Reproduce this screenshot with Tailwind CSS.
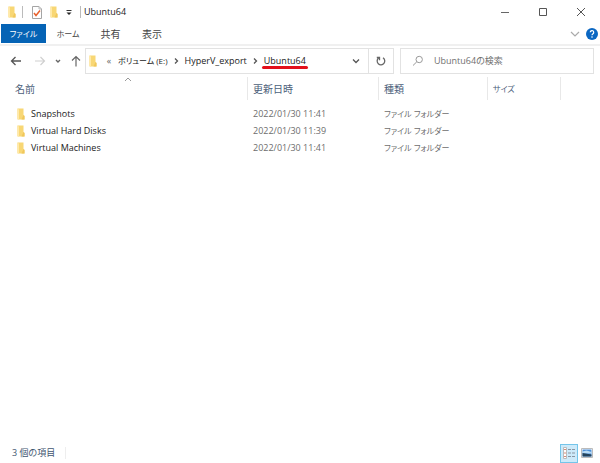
<!DOCTYPE html>
<html lang="ja">
<head>
<meta charset="utf-8">
<meta name="viewport" content="width=device-width, initial-scale=1">
<title>Ubuntu64</title>
<script src="https://cdn.jsdelivr.net/npm/@tailwindcss/browser@4"></script>
</head>
<body class="flex min-h-screen flex-col bg-white font-['Open_Sans','Noto_Sans_CJK_JP',sans-serif] text-[9px] leading-4 text-[#222] [font-feature-settings:'palt']">
<svg class="hidden" aria-hidden="true">
  <symbol id="folder" viewBox="0 0 8 12">
    <path fill="#f8d775" d="M.5.5h6v6.500l1 1V11.500h-7z"/>
    <path fill="#ffe9a8" d="M.3.5L2 1.500v10l-1.700-.6z"/>
    <path fill="#f0c75c" d="M6.500 7l1 1v3.500H4.500z"/>
  </symbol>
</svg>

<header class="flex h-6 items-center pl-2">
  <svg class="h-3 w-2"><use href="#folder"/></svg>
  <span class="ml-1.5 h-3 w-px bg-[#bbb]"></span>
  <button class="ml-2" aria-label="プロパティ">
    <svg class="h-[13px] w-3" viewBox="0 0 12 13" fill="none"><path d="M1.500.5h6.500l2.500 2.500v9.500h-9z" fill="#fff" stroke="#a5a5a5"/><path d="M8 .5V3h2.500" stroke="#bbb"/><path d="M3 7l2 2.500 4-5" stroke="#e8602c" stroke-width="1.500"/></svg>
  </button>
  <button class="ml-[7px]" aria-label="新しいフォルダー"><svg class="h-3 w-2"><use href="#folder"/></svg></button>
  <button class="ml-[7px]" aria-label="クイック アクセスのカスタマイズ">
    <svg class="h-2 w-2" viewBox="0 0 8 8"><path d="M1.500 2.500h5" stroke="#333"/><path d="M1.500 4.500h5L4 7z" fill="#222"/></svg>
  </button>
  <span class="ml-[7px] h-3 w-px bg-[#bbb]"></span>
  <h1 class="ml-[3px]">Ubuntu64</h1>
  <div class="ml-auto flex">
    <button class="grid h-6 w-[38px] place-items-center" aria-label="最小化"><svg class="h-2.5 w-2.5" viewBox="0 0 10 10"><path d="M1 5.500h8" stroke="#666"/></svg></button>
    <button class="grid h-6 w-[38px] place-items-center" aria-label="最大化"><svg class="h-2.5 w-2.5" viewBox="0 0 10 10"><path d="M1.500 1.500h7v7h-7z" fill="none" stroke="#555"/></svg></button>
    <button class="grid h-6 w-[38px] place-items-center" aria-label="閉じる"><svg class="h-2.5 w-2.5" viewBox="0 0 10 10"><path d="M1 1l8 8M9 1L1 9" stroke="#555"/></svg></button>
  </div>
</header>

<nav class="flex h-[22px] items-center border-b-2 border-[#f0f0f0] text-[#444]">
  <button class="ml-px h-[19px] w-[45px] self-start bg-[#0563b5] text-[8px] text-white">ファイル</button>
  <button class="w-11 text-[8px]">ホーム</button>
  <button class="w-[41px] text-[10px]">共有</button>
  <button class="w-[42px] text-[10px]">表示</button>
  <button class="ml-auto" aria-label="リボンの展開"><svg class="h-2.5 w-2.5" viewBox="0 0 10 10"><path d="M1 3l4 4 4-4" fill="none" stroke="#aaa" stroke-width="1.200"/></svg></button>
  <button class="mr-0.5 ml-1.5" aria-label="ヘルプ">
    <svg class="h-3 w-3" viewBox="0 0 12 12" fill="none"><circle cx="6" cy="6" r="6" fill="#0b67c2"/><path d="M4.300 4.300a1.700 1.700 0 1 1 2.700 1.400c-.7.500-1 .7-1 1.500" stroke="#fff" stroke-width="1.200"/><circle cx="6" cy="9" r=".8" fill="#fff"/></svg>
  </button>
</nav>

<div class="flex items-center pt-0.5 pr-1.5 text-[#333]">
  <div class="flex w-[85px] items-center pl-2.5">
    <button aria-label="戻る"><svg class="h-3 w-3" viewBox="0 0 12 12" fill="none" stroke="#555"><path d="M11 6H1.500M5.500 2l-4 4 4 4" stroke-width="1.300"/></svg></button>
    <button class="ml-3" aria-label="進む"><svg class="h-3 w-3" viewBox="0 0 12 12" fill="none" stroke="#d0d0d0"><path d="M1 6h9.500M6.500 2l4 4-4 4" stroke-width="1.200"/></svg></button>
    <button class="ml-2" aria-label="最近表示した場所"><svg class="h-2 w-2" viewBox="0 0 8 8" fill="none" stroke="#666"><path d="M2 3l2 2 2-2" stroke-width="1.400"/></svg></button>
    <button class="ml-2" aria-label="上へ"><svg class="h-3 w-3" viewBox="0 0 12 12" fill="none" stroke="#666"><path d="M6 11.500V1.500M2 5.500l4-4 4 4" stroke-width="1.200"/></svg></button>
  </div>
  <div class="flex h-[26px] flex-1 items-center border border-[#e2e2e2] pl-[3px] text-[#222]">
    <svg class="h-3 w-2"><use href="#folder"/></svg>
    <span class="ml-1 w-4 text-center text-[#666]">«</span>
    <a href="#" class="ml-px text-[8px]">ボリューム (E:)</a>
    <svg class="mx-1 h-2 w-2" viewBox="0 0 8 8" fill="none" stroke="#555"><path d="M3 1.500L5.500 4 3 6.500" stroke-width="1.300"/></svg>
    <a href="#" class="ml-px">HyperV_export</a>
    <svg class="mx-1 h-2 w-2" viewBox="0 0 8 8" fill="none" stroke="#555"><path d="M3 1.500L5.500 4 3 6.500" stroke-width="1.300"/></svg>
    <a href="#" class="relative ml-px">Ubuntu64<span class="absolute -inset-x-0.5 bottom-0 h-[3px] rounded-full bg-[#e3101b]"></span></a>
    <button class="ml-auto grid h-full w-6 place-items-center" aria-label="以前の場所"><svg class="h-2 w-2" viewBox="0 0 8 8" fill="none" stroke="#555"><path d="M1 2.500l3 3 3-3" stroke-width="1.300"/></svg></button>
    <button class="grid h-full w-[25px] place-items-center border-l border-[#e2e2e2]" aria-label="更新"><svg class="h-2.5 w-2.5" viewBox="0 0 10 10" fill="none" stroke="#666" stroke-width="1.300"><path d="M7 1.800a3.800 3.800 0 1 1-4.500.3M.8 1.500h2.700v2.700"/></svg></button>
  </div>
  <label class="ml-1.5 flex h-[26px] w-[194px] items-center border border-[#e2e2e2] pl-[11px]">
    <svg class="h-3 w-3" viewBox="0 0 12 12" fill="none" stroke="#999"><circle cx="7.200" cy="4.500" r="3.200"/><path d="M4.800 6.800L1 10.500"/></svg>
    <input type="search" aria-label="検索" placeholder="Ubuntu64の検索" class="ml-2.5 min-w-0 flex-1 outline-none placeholder:text-[#707070]">
  </label>
</div>

<main class="flex-1 pt-[3px]">
  <table class="w-full table-fixed border-separate border-spacing-0 text-left">
    <colgroup><col class="w-[248px]"><col class="w-[131px]"><col class="w-[109px]"><col class="w-[73px]"><col></colgroup>
    <thead class="text-[10px] text-[#4c607a]">
      <tr class="h-[23px]">
        <th class="relative border-r border-[#e8e8e8] p-0 pl-[15px] font-normal">名前<svg class="absolute -top-px left-[124px] h-2 w-2" viewBox="0 0 8 8" fill="none" stroke="#999"><path d="M1 5l3-3 3 3"/></svg></th>
        <th class="border-r border-[#e8e8e8] p-0 pl-[5px] font-normal">更新日時</th>
        <th class="border-r border-[#e8e8e8] p-0 pl-[5px] font-normal">種類</th>
        <th class="border-r border-[#e8e8e8] p-0 pl-[5px] text-[8px] font-normal">サイズ</th>
        <td></td>
      </tr>
    </thead>
    <tbody class="text-[#6d6d6d]">
      <tr><td class="h-[5px] p-0" colspan="5"></td></tr>
      <tr class="h-[17px]"><td class="p-0 pl-[17px] text-[#222]"><div class="flex items-center gap-1.5"><svg class="h-3 w-2"><use href="#folder"/></svg>Snapshots</div></td><td class="p-0 pl-[5px]">2022/01/30 11:41</td><td class="p-0 pl-[5px] text-[8px]">ファイル フォルダー</td><td></td><td></td></tr>
      <tr class="h-[17px]"><td class="p-0 pl-[17px] text-[#222]"><div class="flex items-center gap-1.5"><svg class="h-3 w-2"><use href="#folder"/></svg>Virtual Hard Disks</div></td><td class="p-0 pl-[5px]">2022/01/30 11:39</td><td class="p-0 pl-[5px] text-[8px]">ファイル フォルダー</td><td></td><td></td></tr>
      <tr class="h-[17px]"><td class="p-0 pl-[17px] text-[#222]"><div class="flex items-center gap-1.5"><svg class="h-3 w-2"><use href="#folder"/></svg>Virtual Machines</div></td><td class="p-0 pl-[5px]">2022/01/30 11:41</td><td class="p-0 pl-[5px] text-[8px]">ファイル フォルダー</td><td></td><td></td></tr>
    </tbody>
  </table>
</main>

<footer class="flex h-5 items-center pr-[7px] pl-3 text-[#3f566f]">
  <span>3 個の項目</span>
  <span class="ml-2.5 h-3 w-px bg-[#eee]"></span>
  <button class="ml-auto grid h-[19px] w-[18px] place-items-center border border-[#74c5ea] bg-[#cdeafa]" aria-label="詳細">
    <svg class="h-3 w-3" viewBox="0 0 12 12" fill="none"><path d="M.5.5h3v11h-3z" fill="#fff" stroke="#bbb"/><path d="M1 2.500h2M1 6h2M1 9.500h2" stroke="#d98a78"/><path d="M5 2.500h3M9 2.500h3M5 6h3M9 6h3M5 9.500h3M9 9.500h3" stroke="#8a96a2"/></svg>
  </button>
  <button class="ml-[3px]" aria-label="大アイコン">
    <svg class="h-2.5 w-3" viewBox="0 0 12 10"><path d="M.5.5h11v9H.5z" fill="#fff" stroke="#bbb"/><path d="M1.500 1.500h9v7h-9z" fill="#4b8fd8"/><path d="M1.500 3.500l4-1 5 1.500v1.500h-9z" fill="#b9dcf5"/><path d="M1.500 5l3 .5 6 1v2h-9z" fill="#24435c"/></svg>
  </button>
</footer>
</body>
</html>
